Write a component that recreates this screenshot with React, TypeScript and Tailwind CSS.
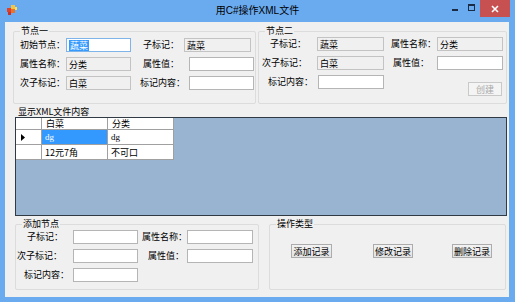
import React from "react";

type Kind = "ro" | "w" | "sel";

function Lbl({ c, t }: { c: string; t: string }) {
  return (
    <span className={`${c} shrink-0 whitespace-nowrap text-[9px] leading-[14px] text-black`}>{t}</span>
  );
}

function TB({ c, v = "", k = "w" }: { c: string; v?: string; k?: Kind }) {
  const skin =
    k === "ro"
      ? "bg-[#f0f0f0] border-[#c3c3c3]"
      : k === "sel"
      ? "bg-white border-[#7eb4ea]"
      : "bg-white border-[#b5b5b5]";
  return (
    <div className={`${c} ${skin} h-[14px] shrink-0 border flex items-center pl-[2px] text-[9px] leading-none text-black`}>
      {k === "sel" ? (
        <span className="bg-[#3399ff] text-white px-[1px] py-[1px] leading-[9px]">{v}</span>
      ) : (
        <span>{v}</span>
      )}
    </div>
  );
}

function Btn({ c, t, disabled = false }: { c: string; t: string; disabled?: boolean }) {
  return (
    <div
      className={`${c} h-[14px] shrink-0 border flex items-center justify-center text-[9px] leading-none ${
        disabled
          ? "border-[#c9c9c9] bg-[#f4f4f4] text-[#a8a8a8]"
          : "border-[#acacac] bg-gradient-to-b from-[#f2f2f2] to-[#e3e3e3] text-black"
      }`}
    >
      {t}
    </div>
  );
}

function Group({ c, title, children }: { c: string; title: string; children?: React.ReactNode }) {
  return (
    <div className={`${c} relative shrink-0 border border-[#dcdcdc] rounded-[2px]`}>
      <span className="absolute -top-[7px] left-[6px] bg-[#f0f0f0] px-[1px] text-[9px] leading-[12px] text-black">
        {title}
      </span>
      {children}
    </div>
  );
}

function Row({ children, c = "" }: { children: React.ReactNode; c?: string }) {
  return <div className={`flex items-start ${c}`}>{children}</div>;
}

function Cell({ c, children }: { c: string; children?: React.ReactNode }) {
  return (
    <div className={`${c} border-r border-b border-[#a0a0a0] flex items-center text-[9px] leading-none overflow-hidden`}>
      {children}
    </div>
  );
}

export default function App() {
  return (
    <div className="w-[515px] h-[302px] bg-[#6aaaee] flex flex-col overflow-hidden font-['Noto_Sans_CJK_SC',sans-serif]">
      {/* title bar */}
      <div className="h-[22px] grid grid-cols-[1fr_auto_1fr] shrink-0">
        <div className="flex items-start pl-[7px] pt-[5px]">
          <svg width="10" height="10" viewBox="0 0 10 10">
            <rect x="0" y="3" width="4" height="4" fill="#e0402a" />
            <rect x="4" y="0" width="4" height="4" fill="#f5c542" />
            <rect x="4" y="4" width="4" height="4" fill="#e8742a" />
            <rect x="1" y="7" width="3" height="3" fill="#c9302a" />
            <rect x="8" y="2" width="2" height="3" fill="#f0e070" />
          </svg>
        </div>
        <div className="flex items-center text-[10px] leading-none text-black font-['Liberation_Sans','Noto_Sans_CJK_SC',sans-serif]">
          用C#操作XML文件
        </div>
        <div className="flex justify-end items-start pr-[5px]">
          <div className="w-[17px] h-[17px] flex items-center justify-center pt-[2px]">
            <div className="w-[6px] h-[2px] bg-[#1b2b44]" />
          </div>
          <div className="w-[17px] h-[17px] flex items-start justify-center pt-[4px]">
            <div className="w-[7px] h-[7px] border border-t-2 border-[#1b2b44]" />
          </div>
          <div className="w-[30px] h-[17px] bg-[#c75050] flex items-center justify-center">
            <svg width="8" height="8" viewBox="0 0 8 8">
              <path d="M1 1 L7 7 M7 1 L1 7" stroke="white" strokeWidth="1.6" />
            </svg>
          </div>
        </div>
      </div>

      {/* client */}
      <div className="ml-[5px] w-[504px] h-[275px] bg-[#f0f0f0] flex flex-col shrink-0">
        <div className="flex mt-[9px]">
          <Group c="ml-[8px] w-[243px] h-[73px] pt-[6px] flex flex-col gap-[5px]" title="节点一">
            <Row>
              <Lbl c="ml-[6px] w-[46px]" t="初始节点：" />
              <TB c="w-[65px]" v="蔬菜" k="sel" />
              <Lbl c="ml-[12px] w-[41px]" t="子标记：" />
              <TB c="w-[67px]" v="蔬菜" k="ro" />
            </Row>
            <Row>
              <Lbl c="ml-[6px] w-[46px]" t="属性名称：" />
              <TB c="w-[65px]" v="分类" k="ro" />
              <Lbl c="ml-[12px] w-[46px]" t="属性值：" />
              <TB c="w-[65px]" />
            </Row>
            <Row>
              <Lbl c="ml-[6px] w-[46px]" t="次子标记：" />
              <TB c="w-[65px]" v="白菜" k="ro" />
              <Lbl c="ml-[9px] w-[49px]" t="标记内容：" />
              <TB c="w-[65px]" />
            </Row>
          </Group>
          <Group c="ml-[2px] w-[249px] h-[73px] pt-[5px] flex flex-col gap-[5px]" title="节点二">
            <Row>
              <Lbl c="ml-[11px] w-[47px]" t="子标记：" />
              <TB c="w-[67px]" v="蔬菜" k="ro" />
              <Lbl c="ml-[7px] w-[46px]" t="属性名称：" />
              <TB c="w-[66px]" v="分类" k="ro" />
            </Row>
            <Row>
              <Lbl c="ml-[3px] w-[55px]" t="次子标记：" />
              <TB c="w-[67px]" v="白菜" k="ro" />
              <Lbl c="ml-[9px] w-[44px]" t="属性值：" />
              <TB c="w-[66px]" />
            </Row>
            <Row>
              <Lbl c="ml-[9px] w-[50px]" t="标记内容：" />
              <TB c="w-[66px]" />
              <Btn c="ml-[84px] w-[34px] mt-[7px]" t="创建" disabled />
            </Row>
          </Group>
        </div>

        <div className="mt-[3px] h-[10px] pl-[13px] text-[9px] leading-[10px] text-black">显示XML文件内容</div>

        {/* data grid */}
        <div className="ml-[10px] w-[492px] h-[99px] shrink-0 border border-[#2f3a44] bg-[#99b4d1]">
          <div className="grid grid-cols-[26px_66px_66px] grid-rows-[12px_15px_15px] w-fit bg-white">
            <Cell c="bg-white" />
            <Cell c="pl-[4px] bg-white">白菜</Cell>
            <Cell c="pl-[4px] bg-white">分类</Cell>
            <Cell c="pl-[5px] bg-white">
              <svg width="4" height="7" viewBox="0 0 4 7">
                <path d="M0 0 L4 3.5 L0 7 Z" fill="black" />
              </svg>
            </Cell>
            <Cell c="pl-[3px] bg-[#3399ff] text-white font-['Liberation_Serif',serif]">dg</Cell>
            <Cell c="pl-[3px] bg-white font-['Liberation_Serif',serif]">dg</Cell>
            <Cell c="bg-white" />
            <Cell c="pl-[3px] bg-white">12元7角</Cell>
            <Cell c="pl-[3px] bg-white">不可口</Cell>
          </div>
        </div>

        <div className="flex mt-[8px]">
          <Group c="ml-[10px] w-[244px] h-[66px] pt-[5px] flex flex-col gap-[5px]" title="添加节点">
            <Row>
              <Lbl c="ml-[11px] w-[46px]" t="子标记：" />
              <TB c="w-[65px]" />
              <Lbl c="ml-[4px] w-[45px]" t="属性名称：" />
              <TB c="w-[66px]" />
            </Row>
            <Row>
              <Lbl c="ml-[1px] w-[56px]" t="次子标记：" />
              <TB c="w-[65px]" />
              <Lbl c="ml-[10px] w-[39px]" t="属性值：" />
              <TB c="w-[66px]" />
            </Row>
            <Row>
              <Lbl c="ml-[8px] w-[49px]" t="标记内容：" />
              <TB c="w-[65px]" />
            </Row>
          </Group>
          <Group c="ml-[10px] w-[237px] h-[66px] pt-[19px]" title="操作类型">
            <Row>
              <Btn c="ml-[21px] w-[41px]" t="添加记录" />
              <Btn c="ml-[41px] w-[40px]" t="修改记录" />
              <Btn c="ml-[39px] w-[40px]" t="删除记录" />
            </Row>
          </Group>
        </div>
      </div>
    </div>
  );
}
